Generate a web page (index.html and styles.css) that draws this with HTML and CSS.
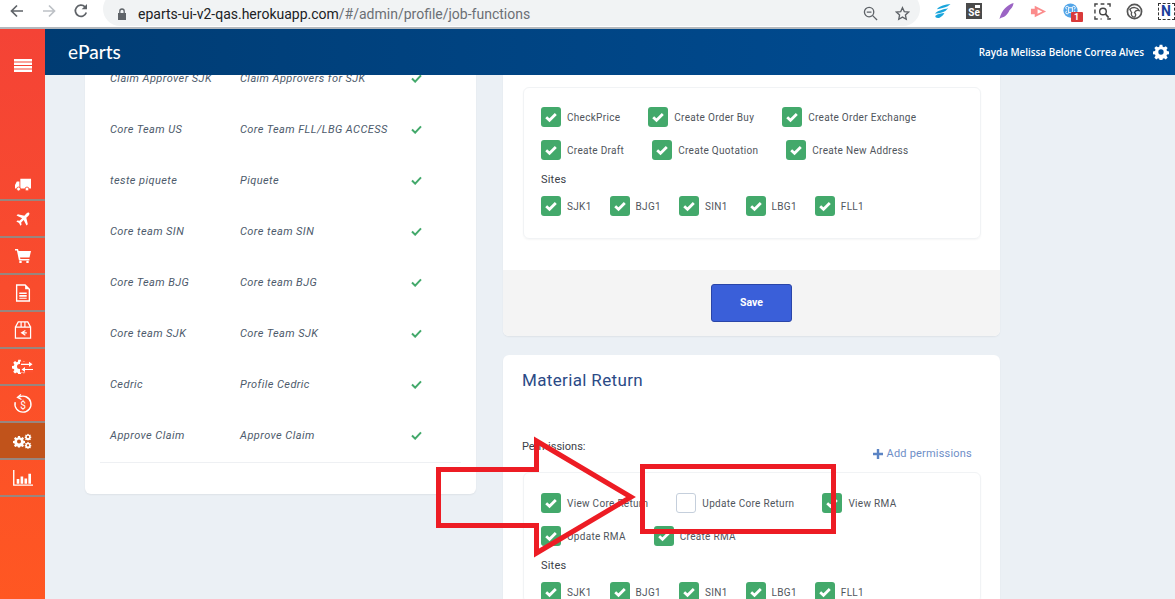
FILE: index.html
```html
<!DOCTYPE html>
<html lang="en">
<head>
    <meta charset="UTF-8">
    <meta name="viewport" content="width=device-width, initial-scale=1.0">
    <title>eParts - Job Functions</title>
    <link rel="stylesheet" href="styles.css">
</head>
<body>
    <svg class="defs" width="0" height="0">
        <symbol id="tick" viewBox="0 0 20 20"><path d="M5.200 10.200l3.300 3 6.300-6.200" fill="none" stroke="#fff" stroke-width="2.800"/></symbol>
        <symbol id="gear" viewBox="0 0 24 24"><path fill-rule="evenodd" d="M10 1h4l.6 3.200 1.900.8 2.700-1.800 2.800 2.800-1.800 2.700.8 1.900 3 .6v4l-3 .6-.8 1.900 1.800 2.700-2.800 2.800-2.700-1.800-1.900.8-.6 3h-4l-.6-3-1.900-.8-2.700 1.800-2.800-2.800 1.800-2.700-.8-1.900-3-.6v-4l3-.6.8-1.900-1.800-2.700 2.800-2.800 2.700 1.800 1.900-.8zM12 8a4 4 0 1 0 0 8 4 4 0 0 0 0-8z"/></symbol>
    </svg>

    <!-- Browser toolbar -->
    <div class="browser">
        <svg class="nav-icon" viewBox="0 0 16 16"><path d="M14 8H3M8 2.500L2.500 8 8 13.500" fill="none" stroke="#5f6368" stroke-width="1.700"/></svg>
        <svg class="nav-icon" viewBox="0 0 16 16"><path d="M2 8h11M8 2.500L13.500 8 8 13.500" fill="none" stroke="#bdc1c6" stroke-width="1.700"/></svg>
        <svg class="nav-icon" viewBox="0 0 16 16"><path d="M13.300 9.500A5.600 5.600 0 1 1 12 3.900" fill="none" stroke="#5f6368" stroke-width="1.700"/><path d="M14 1v5.300H8.700z" fill="#5f6368"/></svg>
        <div class="omnibox">
            <svg class="lock" viewBox="0 0 10 12"><path d="M1 5h8v7H1z" fill="#5f6368"/><path d="M2.800 5V3.200a2.200 2.200 0 0 1 4.400 0V5" fill="none" stroke="#5f6368" stroke-width="1.300"/></svg>
            <span class="url">eparts-ui-v2-qas.herokuapp.com<span class="url-path">/#/admin/profile/job-functions</span></span>
            <svg class="omni-icon" viewBox="0 0 16 16"><circle cx="6.500" cy="6.500" r="5" fill="none" stroke="#5f6368" stroke-width="1.400"/><path d="M10.300 10.300L15 15M4 6.500h5" stroke="#5f6368" stroke-width="1.400"/></svg>
            <svg class="omni-icon" viewBox="0 0 16 16"><path d="M8 1.800l1.900 4.200 4.600.5-3.400 3.100.9 4.500-4-2.300-4 2.300.9-4.500L1.500 6.500 6.100 6z" fill="none" stroke="#5f6368" stroke-width="1.400"/></svg>
        </div>
        <div class="extensions">
            <svg class="ext" viewBox="0 0 18 18"><path d="M17.500 1C12 1.500 6 3 3 6.500c4-.5 8-1.500 11.500-3zM15 5.500C10 6.500 4 8 1 11c4 .3 8-1 11-2.500zM11 10.500c-3 .2-7 1-9.500 3-.8 2 2.500 3 4.500 2 2-1 4-3 5-5z" fill="#19a5dc"/></svg>
            <div class="ext-se"><i class="se-cam"></i>Se</div>
            <svg class="ext" viewBox="0 0 18 18"><path d="M16.500 0C10 2 4 7 1.500 17c3-2.500 4.500-1.500 6.500-3.500 2-1.500 3-3.500 4-5.500 2-2 4-4 4.500-8z" fill="#9b64c4"/></svg>
            <svg class="ext" viewBox="0 0 18 18"><path d="M1 6h4V3l12 6-12 6v-3H1z" fill="#fb8c8c"/><path d="M8 6.500L13 9l-5 2.500z" fill="#fff"/></svg>
            <div class="ext-badged">
                <svg class="ext" viewBox="0 0 18 18"><circle cx="9" cy="8" r="7.500" fill="#52a5e8"/><path d="M7 5h4v5H7zM7 5a1.500 1.500 0 1 0-1.500 1.500M11 5a1.500 1.500 0 1 1 1.500 1.500M7 10a1.500 1.500 0 1 1-1.500-1.500M11 10a1.500 1.500 0 1 0 1.500-1.500" fill="none" stroke="#fff"/></svg>
                <span class="badge">1</span>
            </div>
            <svg class="ext" viewBox="0 0 18 18"><path d="M1 4V1h3M7 1h4M14 1h3v3M1 7v4M1 14v3h3M7 17h1M14 17h3v-1" fill="none" stroke="#444" stroke-width="1.500"/><circle cx="9.500" cy="9" r="3.500" fill="none" stroke="#444" stroke-width="1.500"/><path d="M12 11.500l3.500 4" stroke="#444" stroke-width="1.700"/></svg>
            <svg class="ext" viewBox="0 0 18 18"><circle cx="9" cy="9" r="7.500" fill="none" stroke="#555" stroke-width="1.800"/><path d="M4 6.500c3-2.500 8-2.500 10 1.500-3-1-4 0-5 2 2 2 1 4 0 5-3 0-4-3-3-5-1-1-1-2-2-3.500z" fill="none" stroke="#555" stroke-width="1.400"/></svg>
            <div class="ext-notion">N</div>
        </div>
    </div>

    <div class="app">
        <!-- Sidebar -->
        <aside class="sidebar">
            <div class="menu-toggle">
                <svg class="burger-icon" viewBox="0 0 18 13"><path d="M0 0h18v2.500H0zM0 3.500h18V6H0zM0 7h18v2.500H0zM0 10.500h18V13H0z" fill="#fff"/></svg>
            </div>
            <nav class="side-nav">
                <div class="side-item"><svg class="side-icon" viewBox="0 0 18 14"><path d="M6 0h12v11H6zM5 3H2L0 7v4h5z" fill="#fff"/><circle cx="4" cy="11.500" r="2.200" fill="#fff" stroke="#ff5030"/><circle cx="13.500" cy="11.500" r="2.200" fill="#fff" stroke="#ff5030"/></svg></div>
                <div class="side-item"><svg class="side-icon" viewBox="0 0 16 16"><path d="M14.800.8c1 .8.500 2.300-.3 3.100L11.800 6.600 13.500 14l-1.500 1.500-3.200-6.400-2.900 2.900.4 2.500-1.200 1.200-1.600-3.200L.4 10.900l1.200-1.200 2.500.4 2.900-2.900L.6 4l1.500-1.500 7.400 1.700L12.200 1.500c.8-.8 1.800-1.400 2.600-.7z" fill="#fff"/></svg></div>
                <div class="side-item"><svg class="side-icon" viewBox="0 0 16 14"><path d="M0 0h3l.6 2H16l-1.500 6.500H5l.4 1.500h9v1.500H4L1.900 1.500H0z" fill="#fff"/><circle cx="5.500" cy="13" r="1.300" fill="#fff"/><circle cx="12.500" cy="13" r="1.300" fill="#fff"/></svg></div>
                <div class="side-item"><svg class="box-icon" viewBox="0 0 14 17"><path d="M1 1h8l4 4v11H1z" fill="none" stroke="#fff" stroke-width="1.300"/><path d="M9 1v4h4M3.500 8h7v1.500h-7zM3.500 10.500h7V12h-7zM3.500 13h7v1h-7z" fill="#fff"/></svg></div>
                <div class="side-item"><svg class="box-icon" viewBox="0 0 18 19"><path d="M1 6.500h16V18H1zM1 6.500L4 1h10l3 5.500M7 1v5.500M11 1v5.500" fill="none" stroke="#fff" stroke-width="1.300"/><path d="M11.500 10L7.500 12.500l4 2.500M7.500 12.500H13" fill="none" stroke="#fff" stroke-width="1.200"/></svg></div>
                <div class="side-item"><svg class="transfer-icon" viewBox="0 0 21 17"><use href="#gear" width="15" height="15" y="1" fill="#fff"/><rect x="8" y="3.500" width="13" height="11" fill="#ff5030"/><path d="M9 6.300h10M12 11.500h9" stroke="#fff" stroke-width="1.200"/><path d="M17 3.800l3.500 2.500L17 8.800zM13 9l-3.500 2.500 3.500 2.500z" fill="#fff"/></svg></div>
                <div class="side-item"><svg class="dollar-icon" viewBox="0 0 20 20"><path d="M6 3.200a8 8 0 1 1-3.800 5" fill="none" stroke="#fff" stroke-width="1.400"/><path d="M8 .5L4.500 3.300 8.500 5.500" fill="none" stroke="#fff" stroke-width="1.300"/><text x="10" y="14.500" class="dollar">$</text></svg></div>
                <div class="side-item active"><svg class="gears-icon" viewBox="0 0 19 16"><use href="#gear" width="12" height="12" y="2.500" fill="#fff"/><use href="#gear" width="7" height="7" x="11.500" y=".5" fill="#fff"/><use href="#gear" width="7" height="7" x="11.500" y="8.800" fill="#fff"/></svg></div>
                <div class="side-item"><svg class="chart-icon" viewBox="0 0 19 15"><path d="M.7 0v14.300H19" fill="none" stroke="#fff" stroke-width="1.300"/><path d="M3.500 8.500h2.500V13H3.500zM7.200 6h2.500v7H7.200zM10.900 8h2.500v5h-2.500zM14.600 3.500h2.500V13h-2.500z" fill="#fff"/></svg></div>
            </nav>
        </aside>

        <div class="main">
            <header class="topbar">
                <div class="logo">e<b>Parts</b></div>
                <div class="user">
                    <span class="user-name">Rayda Melissa Belone Correa Alves</span>
                    <svg class="user-gear"><use href="#gear" width="16" height="16" fill="#fff"/></svg>
                </div>
            </header>

            <div class="content">
                <!-- Job functions list -->
                <section class="list-card">
                    <div class="list-row"><span class="col-name">Claim Approver SJK</span><span class="col-desc">Claim Approvers for SJK</span><svg class="list-check" viewBox="0 0 12 10"><path d="M1 5l3.500 3.500L11 1.500" fill="none" stroke="#43a96b" stroke-width="2.200"/></svg></div>
                    <div class="list-row"><span class="col-name">Core Team US</span><span class="col-desc">Core Team FLL/LBG ACCESS</span><svg class="list-check" viewBox="0 0 12 10"><path d="M1 5l3.500 3.500L11 1.500" fill="none" stroke="#43a96b" stroke-width="2.200"/></svg></div>
                    <div class="list-row"><span class="col-name">teste piquete</span><span class="col-desc">Piquete</span><svg class="list-check" viewBox="0 0 12 10"><path d="M1 5l3.500 3.500L11 1.500" fill="none" stroke="#43a96b" stroke-width="2.200"/></svg></div>
                    <div class="list-row"><span class="col-name">Core team SIN</span><span class="col-desc">Core team SIN</span><svg class="list-check" viewBox="0 0 12 10"><path d="M1 5l3.500 3.500L11 1.500" fill="none" stroke="#43a96b" stroke-width="2.200"/></svg></div>
                    <div class="list-row"><span class="col-name">Core Team BJG</span><span class="col-desc">Core team BJG</span><svg class="list-check" viewBox="0 0 12 10"><path d="M1 5l3.500 3.500L11 1.500" fill="none" stroke="#43a96b" stroke-width="2.200"/></svg></div>
                    <div class="list-row"><span class="col-name">Core team SJK</span><span class="col-desc">Core Team SJK</span><svg class="list-check" viewBox="0 0 12 10"><path d="M1 5l3.500 3.500L11 1.500" fill="none" stroke="#43a96b" stroke-width="2.200"/></svg></div>
                    <div class="list-row"><span class="col-name">Cedric</span><span class="col-desc">Profile Cedric</span><svg class="list-check" viewBox="0 0 12 10"><path d="M1 5l3.500 3.500L11 1.500" fill="none" stroke="#43a96b" stroke-width="2.200"/></svg></div>
                    <div class="list-row last"><span class="col-name">Approve Claim</span><span class="col-desc">Approve Claim</span><svg class="list-check" viewBox="0 0 12 10"><path d="M1 5l3.500 3.500L11 1.500" fill="none" stroke="#43a96b" stroke-width="2.200"/></svg></div>
                </section>

                <div class="forms">
                    <!-- Upper form, scrolled under the header -->
                    <section class="form-card upper">
                        <div class="perm-box">
                            <div class="perm-row">
                                <label class="perm"><span class="box"><svg><use href="#tick"/></svg></span>CheckPrice</label>
                                <label class="perm"><span class="box"><svg><use href="#tick"/></svg></span>Create Order Buy</label>
                                <label class="perm"><span class="box"><svg><use href="#tick"/></svg></span>Create Order Exchange</label>
                            </div>
                            <div class="perm-row">
                                <label class="perm"><span class="box"><svg><use href="#tick"/></svg></span>Create Draft</label>
                                <label class="perm"><span class="box"><svg><use href="#tick"/></svg></span>Create Quotation</label>
                                <label class="perm"><span class="box"><svg><use href="#tick"/></svg></span>Create New Address</label>
                            </div>
                            <div class="sites-label">Sites</div>
                            <div class="perm-row sites">
                                <label class="perm"><span class="box"><svg><use href="#tick"/></svg></span>SJK1</label>
                                <label class="perm"><span class="box"><svg><use href="#tick"/></svg></span>BJG1</label>
                                <label class="perm"><span class="box"><svg><use href="#tick"/></svg></span>SIN1</label>
                                <label class="perm"><span class="box"><svg><use href="#tick"/></svg></span>LBG1</label>
                                <label class="perm"><span class="box"><svg><use href="#tick"/></svg></span>FLL1</label>
                            </div>
                        </div>
                        <div class="form-footer"><button class="save">Save</button></div>
                    </section>

                    <!-- Material Return -->
                    <section class="form-card lower">
                        <h2>Material Return</h2>
                        <div class="perm-head">
                            <span class="perm-title">Permissions:</span>
                            <a class="add-perm"><svg viewBox="0 0 10 10"><path d="M3.800 0h2.400v3.800H10v2.400H6.200V10H3.800V6.200H0V3.800h3.800z" fill="#5b84c4"/></svg>Add permissions</a>
                        </div>
                        <div class="perm-box">
                            <div class="perm-row">
                                <label class="perm"><span class="box"><svg><use href="#tick"/></svg></span>View Core Return</label>
                                <label class="perm"><span class="box off"></span>Update Core Return</label>
                                <label class="perm"><span class="box"><svg><use href="#tick"/></svg></span>View RMA</label>
                            </div>
                            <div class="perm-row">
                                <label class="perm"><span class="box"><svg><use href="#tick"/></svg></span>Update RMA</label>
                                <label class="perm"><span class="box"><svg><use href="#tick"/></svg></span>Create RMA</label>
                            </div>
                            <div class="sites-label">Sites</div>
                            <div class="perm-row sites">
                                <label class="perm"><span class="box"><svg><use href="#tick"/></svg></span>SJK1</label>
                                <label class="perm"><span class="box"><svg><use href="#tick"/></svg></span>BJG1</label>
                                <label class="perm"><span class="box"><svg><use href="#tick"/></svg></span>SIN1</label>
                                <label class="perm"><span class="box"><svg><use href="#tick"/></svg></span>LBG1</label>
                                <label class="perm"><span class="box"><svg><use href="#tick"/></svg></span>FLL1</label>
                            </div>
                        </div>
                    </section>
                </div>
            </div>
        </div>
    </div>

    <!-- Red annotation drawn over the screenshot -->
    <svg class="annotation" viewBox="0 0 1175 599">
        <path d="M438.500 469.500H536.500V441L631 497 536.500 553V525.500H438.500z" fill="none" stroke="#ed1c24" stroke-width="5"/>
        <rect x="642.500" y="466.500" width="191" height="65" fill="none" stroke="#ed1c24" stroke-width="5"/>
    </svg>
</body>
</html>
```

FILE: styles.css
```css
/* General Reset */
* {
    margin: 0;
    padding: 0;
    box-sizing: border-box;
}

body {
    font-family: Roboto, "Liberation Sans", sans-serif;
    background-color: #ebf0f5;
    width: 1175px;
    height: 599px;
    overflow: hidden;
    position: relative;
}

.defs {
    display: block;
    height: 0;
}

/* Browser toolbar */
.browser {
    height: 29px;
    background-color: #ffffff;
    border-bottom: 2px solid #b3b8bd;
    display: flex;
    align-items: center;
    overflow: hidden;
    padding-left: 9px;
}

.nav-icon {
    width: 16px;
    height: 16px;
    margin-top: -5px;
    margin-right: 16px;
    flex: none;
}

.omnibox {
    width: 817px;
    height: 34px;
    margin-top: -9px;
    margin-left: -2px;
    padding-top: 9px;
    padding-left: 14px;
    padding-right: 10px;
    background-color: #f1f3f4;
    border-radius: 17px;
    display: flex;
    align-items: center;
    flex: none;
}

.lock {
    width: 10px;
    height: 12px;
    margin-right: 11px;
}

.url {
    font-size: 14px;
    color: #202124;
    flex: 1;
}

.url-path {
    color: #6b6f74;
}

.omni-icon {
    width: 15px;
    height: 15px;
    margin-left: 17px;
}

.extensions {
    display: grid;
    grid-template-columns: repeat(8, 32px);
    justify-items: center;
    align-items: center;
    margin-top: -5px;
    margin-left: 6px;
    flex: none;
}

.ext {
    width: 17px;
    height: 17px;
    display: block;
}

.ext-se {
    width: 16px;
    height: 16px;
    background-color: #4a4a4a;
    color: #fff;
    font-size: 10px;
    font-weight: bold;
    text-align: center;
    line-height: 20px;
    position: relative;
}

.se-cam {
    position: absolute;
    right: 2px;
    top: 2px;
    width: 5px;
    height: 3px;
    background-color: #fff;
}

.ext-badged {
    position: relative;
}

.badge {
    position: absolute;
    left: 9px;
    top: 9px;
    width: 12px;
    height: 10px;
    background-color: #d93a3a;
    color: #fff;
    font-size: 9px;
    font-weight: bold;
    text-align: center;
    line-height: 10px;
    border-radius: 1px;
}

.ext-notion {
    width: 17px;
    height: 17px;
    border: 1px dashed #333;
    color: #1a3f9c;
    font-size: 14px;
    font-weight: bold;
    text-align: center;
    line-height: 15px;
}

/* App shell */
.app {
    display: flex;
    height: 570px;
}

.sidebar {
    width: 45px;
    flex: none;
    background: linear-gradient(#f44336, #ff5722);
}

.menu-toggle {
    height: 137px;
    padding-top: 30px;
    display: flex;
    justify-content: center;
    align-items: flex-start;
}

.burger-icon {
    width: 18px;
    height: 13px;
}

.side-nav {
    display: flex;
    flex-direction: column;
}

.side-item {
    height: 37px;
    border-bottom: 2px solid #98867f;
    display: flex;
    align-items: center;
    justify-content: center;
}

.side-item:first-child {
    height: 35px;
    padding-top: 5px;
}

.side-item.active {
    background-color: #c1531b;
}

.side-icon {
    width: 16px;
    height: 14px;
}

.box-icon {
    width: 18px;
    height: 18px;
}

.transfer-icon {
    width: 21px;
    height: 17px;
}

.dollar-icon {
    width: 20px;
    height: 20px;
}

.gears-icon {
    width: 19px;
    height: 16px;
}

.chart-icon {
    width: 20px;
    height: 16px;
}

.dollar {
    font-size: 10px;
    fill: #ffffff;
    text-anchor: middle;
}

.main {
    flex: 1;
    display: flex;
    flex-direction: column;
    min-width: 0;
}

/* Header */
.topbar {
    height: 46px;
    flex: none;
    background: linear-gradient(to right, #003c73, #004f99);
    display: flex;
    align-items: center;
    justify-content: space-between;
    padding-left: 23px;
    padding-right: 6px;
    position: relative;
    z-index: 2;
}

.logo {
    font-family: Lato, sans-serif;
    font-size: 19px;
    color: #ffffff;
    margin-top: -2px;
}

.logo b {
    font-weight: 500;
}

.user {
    display: flex;
    align-items: center;
    gap: 9px;
}

.user-name {
    font-family: "Open Sans", sans-serif;
    font-size: 9.900px;
    font-weight: 600;
    color: #ffffff;
}

.user-gear {
    width: 16px;
    height: 16px;
}

.content {
    flex: 1;
    display: flex;
    align-items: flex-start;
    gap: 27px;
    padding-left: 40px;
    overflow: hidden;
}

/* Left list */
.list-card {
    width: 391px;
    height: 441px;
    flex: none;
    background-color: #ffffff;
    border-radius: 0 0 6px 6px;
    box-shadow: 0 1px 2px rgba(0, 0, 0, 0.06);
    padding: 0 15px;
    margin-top: -22px;
    display: flex;
    flex-direction: column;
}

.list-row {
    height: 51px;
    flex: none;
    display: flex;
    align-items: center;
    padding-left: 10px;
    font-size: 11px;
    font-style: italic;
    color: #4d5a6b;
    letter-spacing: 0.42px;
}

.list-row.last {
    border-bottom: 1px solid #eef0f3;
    height: 53px;
    padding-bottom: 2px;
}

.col-name {
    width: 130px;
}

.col-desc {
    width: 171px;
}

.list-check {
    width: 11px;
    height: 9px;
}

/* Right forms */
.forms {
    width: 497px;
    flex: none;
    display: flex;
    flex-direction: column;
    gap: 19px;
}

.form-card {
    background-color: #ffffff;
    border-radius: 6px;
    box-shadow: 0 1px 2px rgba(0, 0, 0, 0.06);
}

.form-card.upper {
    border-radius: 0 0 6px 6px;
    padding-top: 12px;
}

.perm-box {
    margin: 0 19px 0 20px;
    padding: 19px 17px 0;
    border: 1px solid #f1f3f5;
    border-radius: 6px;
    box-shadow: 0 1px 2px rgba(0, 0, 0, 0.04);
}

.upper .perm-box {
    height: 152px;
    margin-bottom: 31px;
}

.perm-row {
    display: flex;
    gap: 28px;
    height: 20px;
    margin-bottom: 13px;
}

.perm-row.sites {
    margin-bottom: 0;
    gap: 18px;
}

.perm {
    display: flex;
    align-items: center;
    gap: 6px;
    font-size: 10px;
    color: #50555c;
    letter-spacing: 0.3px;
    white-space: nowrap;
}

.box {
    width: 20px;
    height: 20px;
    background-color: #43a96b;
    border-radius: 3px;
    flex: none;
    display: block;
}

.box svg {
    width: 20px;
    height: 20px;
    display: block;
}

.box.off {
    background-color: #ffffff;
    border: 1px solid #c5cfdc;
}

.sites-label {
    font-size: 11px;
    color: #3b4048;
    height: 15px;
    margin-top: 2px;
    margin-bottom: 8px;
    letter-spacing: 0.2px;
}

.form-footer {
    height: 66px;
    background-color: #f4f4f4;
    border-radius: 0 0 6px 6px;
    display: flex;
    align-items: center;
    justify-content: center;
}

.save {
    width: 81px;
    height: 38px;
    background-color: #3a5fd9;
    border: 1px solid #2a45a8;
    border-radius: 3px;
    color: #ffffff;
    font-family: Roboto, sans-serif;
    font-size: 10.500px;
    font-weight: bold;
    padding-bottom: 2px;
}

.form-card.lower {
    padding-top: 15px;
    height: 300px;
}

.lower h2 {
    font-size: 17px;
    font-weight: 400;
    color: #2b4a86;
    letter-spacing: 0.35px;
    padding-left: 19px;
    height: 20px;
}

.perm-head {
    height: 82px;
    padding: 0 28px 0 19px;
    display: flex;
    justify-content: space-between;
    align-items: flex-end;
}

.perm-title {
    font-size: 11px;
    color: #3b4048;
    margin-bottom: 19px;
}

.add-perm {
    font-size: 11px;
    color: #6e8ec7;
    letter-spacing: 0.2px;
    display: flex;
    align-items: center;
    gap: 4px;
    margin-bottom: 12px;
}

.add-perm svg {
    width: 10px;
    height: 10px;
}

.lower .perm-box {
    padding-top: 20px;
}

/* Annotation */
.annotation {
    position: absolute;
    left: 0;
    top: 0;
    width: 1175px;
    height: 599px;
    z-index: 5;
    pointer-events: none;
}
```
